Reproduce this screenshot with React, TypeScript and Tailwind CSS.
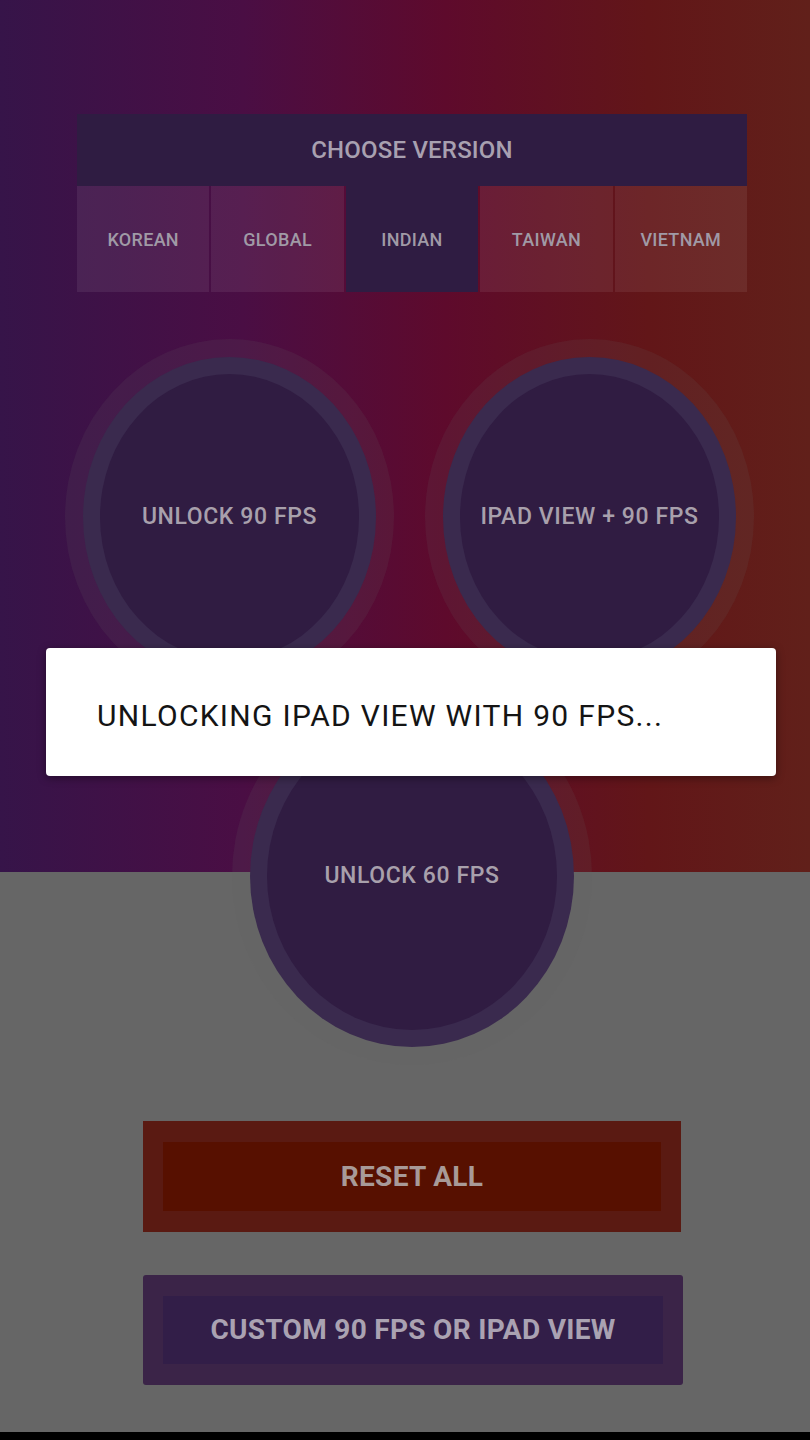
import React from 'react';

const versions = ['KOREAN', 'GLOBAL', 'INDIAN', 'TAIWAN', 'VIETNAM'];

function Circle({ label, ringW, ringH }: { label: string; ringW: string; ringH: string }) {
  return (
    <div className="w-fit rounded-[50%] bg-[#666666]/[0.14] p-[18px]">
      <div className={`rounded-[50%] bg-[#3a2a4e] p-[17px] ${ringW} ${ringH}`}>
        <div className="w-full h-full rounded-[50%] bg-[#301c42] flex items-center justify-center">
          <span className="text-[23px] font-medium text-[#a8a0ac] tracking-[0.6px]">{label}</span>
        </div>
      </div>
    </div>
  );
}

export default function App() {
  return (
    <div
      className="relative w-full h-[1440px] flex flex-col overflow-hidden bg-[#666666] bg-[image:linear-gradient(to_right,#361449_0%,#4a0e44_30%,#5e0a2c_55%,#621618_80%,#61201a_100%)] bg-[length:100%_872px] bg-no-repeat"
      style={{ fontFamily: 'Roboto, "Noto Sans", sans-serif' }}
    >
      {/* version chooser */}
      <div className="mt-[114px] ml-[77px] w-[670px]">
        <div className="h-[72px] bg-[#2f1c42] flex items-center justify-center">
          <span className="text-[24px] font-medium text-[#a8a0b0] tracking-[0.2px]">CHOOSE VERSION</span>
        </div>
        <div className="h-[106px] grid grid-cols-5 gap-[2px]">
          {versions.map(v => (
            <div
              key={v}
              className={`flex items-center justify-center ${v === 'INDIAN' ? 'bg-[#2f1c42]' : 'bg-white/[0.07]'}`}
            >
              <span className="text-[18px] font-medium text-[#a09aa6] tracking-[0.3px]">{v}</span>
            </div>
          ))}
        </div>
      </div>

      {/* fps buttons */}
      <div className="mt-[47px] ml-[65px] flex gap-[31px]">
        <Circle label="UNLOCK 90 FPS" ringW="w-[293px]" ringH="h-[320px]" />
        <Circle label="IPAD VIEW + 90 FPS" ringW="w-[293px]" ringH="h-[320px]" />
      </div>
      <div className="mt-[-8px] ml-[232px]">
        <Circle label="UNLOCK 60 FPS" ringW="w-[324px]" ringH="h-[342px]" />
      </div>

      {/* actions */}
      <div className="mt-[56px] ml-[143px] w-[538px] h-[111px] bg-[#5a1a12] px-[20px] py-[21px]">
        <div className="w-full h-full bg-[#571000] flex items-center justify-center">
          <span className="text-[28px] font-bold text-[#a89a98] tracking-[0.3px]">RESET ALL</span>
        </div>
      </div>
      <div className="mt-[43px] ml-[143px] w-[540px] h-[110px] rounded-[3px] bg-[#3b2448] px-[20px] py-[21px]">
        <div className="w-full h-full bg-[#321e48] flex items-center justify-center">
          <span className="text-[28px] font-bold text-[#aaa2b2] tracking-[0.3px]">CUSTOM 90 FPS OR IPAD VIEW</span>
        </div>
      </div>

      <div className="flex-1" />
      <div className="h-[8px] bg-black" />

      {/* progress dialog */}
      <div className="absolute left-[46px] top-[648px] w-[730px] h-[128px] bg-white rounded-[4px] shadow-[0_2px_8px_rgba(0,0,0,0.4)] flex items-center pl-[51px]">
        <span className="text-[30px] text-[#141414] tracking-[1.3px] mt-[6px]">UNLOCKING IPAD VIEW WITH 90 FPS...</span>
      </div>
    </div>
  );
}
